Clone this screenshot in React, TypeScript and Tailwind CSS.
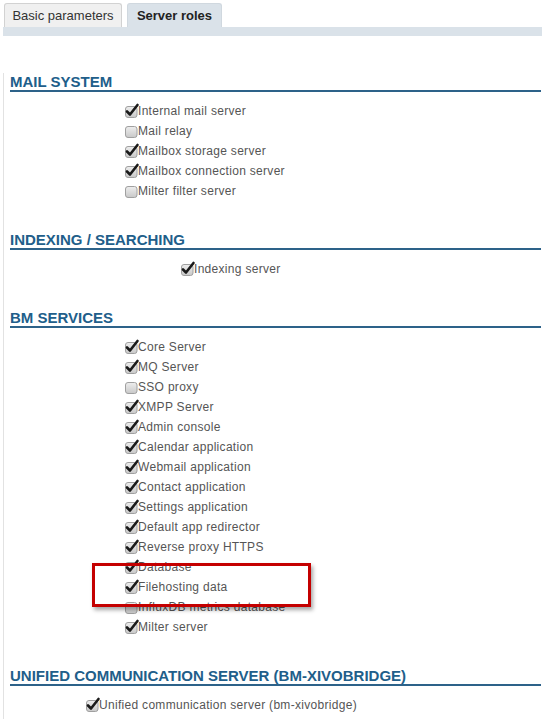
type Role = { label: string; checked: boolean };

const mailRoles: Role[] = [
  { label: "Internal mail server", checked: true },
  { label: "Mail relay", checked: false },
  { label: "Mailbox storage server", checked: true },
  { label: "Mailbox connection server", checked: true },
  { label: "Milter filter server", checked: false },
];

const indexRoles: Role[] = [{ label: "Indexing server", checked: true }];

const bmRoles: Role[] = [
  { label: "Core Server", checked: true },
  { label: "MQ Server", checked: true },
  { label: "SSO proxy", checked: false },
  { label: "XMPP Server", checked: true },
  { label: "Admin console", checked: true },
  { label: "Calendar application", checked: true },
  { label: "Webmail application", checked: true },
  { label: "Contact application", checked: true },
  { label: "Settings application", checked: true },
  { label: "Default app redirector", checked: true },
  { label: "Reverse proxy HTTPS", checked: true },
  { label: "Database", checked: true },
  { label: "Filehosting data", checked: true },
  { label: "InfluxDB metrics database", checked: false },
  { label: "Milter server", checked: true },
];

const ucRoles: Role[] = [
  { label: "Unified communication server (bm-xivobridge)", checked: true },
];

function Box({ checked }: { checked: boolean }) {
  return (
    <svg width="13" height="14" viewBox="0 0 13 14" className="shrink-0 overflow-visible">
      <defs>
        <linearGradient id="cbg" x1="0" y1="0" x2="0" y2="1">
          <stop offset="0" stopColor="#eeeeee" />
          <stop offset="1" stopColor="#c8c8c8" />
        </linearGradient>
      </defs>
      <rect x="0.5" y="2.5" width="11.5" height="11" rx="2.5" fill="url(#cbg)" stroke="#a0a0a0" />
      {checked && (
        <path
          d="M2 7.5 L5 10.5 L12.5 1"
          fill="none"
          stroke="#1a1a1a"
          strokeWidth="2.6"
          strokeLinecap="round"
          strokeLinejoin="round"
        />
      )}
    </svg>
  );
}

function Section({
  title,
  roles,
  indent,
  first,
}: {
  title: string;
  roles: Role[];
  indent: string;
  first?: boolean;
}) {
  return (
    <div className={first ? "mt-[37px]" : "mt-[30px]"}>
      <h2 className="text-[15px] leading-[17px] font-bold text-[#215e8a] border-b-2 border-[#2d6289] uppercase">
        {title}
      </h2>
      <div className={`mt-[9px] ${indent}`}>
        {roles.map((r) => (
          <div key={r.label} className="flex items-center h-[20px]">
            <Box checked={r.checked} />
            <span className="text-[12px] text-[#555] tracking-[0.3px] leading-[20px]">{r.label}</span>
          </div>
        ))}
      </div>
    </div>
  );
}

export default function App() {
  return (
    <div
      className="relative w-[542px] h-[719px] bg-white overflow-hidden"
      style={{ fontFamily: '"Liberation Sans", Arial, sans-serif' }}
    >
      <div className="ml-[3px] pt-[3px]">
        <div className="flex items-end gap-[5px] pl-[1px]">
          <div className="w-[118px] h-[24px] bg-[#f0f0f0] border border-[#d2d2d2] border-b-0 rounded-t-[3px] text-[13px] text-[#333] flex items-center justify-center">
            Basic parameters
          </div>
          <div className="w-[95px] h-[24px] bg-[#dae2e9] border border-[#d0d8df] border-b-0 rounded-t-[3px] text-[13px] font-bold text-[#222] flex items-center justify-center">
            Server roles
          </div>
        </div>
        <div className="h-[9px] bg-[#dae2e9]" />
        <div className="border-l border-[#e2e2e2] pl-[6px] pr-[1px] h-[700px]">
          <Section title="Mail system" roles={mailRoles} indent="pl-[115px]" first />
          <Section title="Indexing / Searching" roles={indexRoles} indent="pl-[171px]" />
          <Section title="BM Services" roles={bmRoles} indent="pl-[115px]" />
          <Section title="Unified communication server (bm-xivobridge)" roles={ucRoles} indent="pl-[76px]" />
        </div>
      </div>
      <div className="absolute left-[92px] top-[563px] w-[219px] h-[44px] border-[3px] border-[#c40000] shadow-[2px_3px_4px_rgba(0,0,0,0.35)]" />
    </div>
  );
}
